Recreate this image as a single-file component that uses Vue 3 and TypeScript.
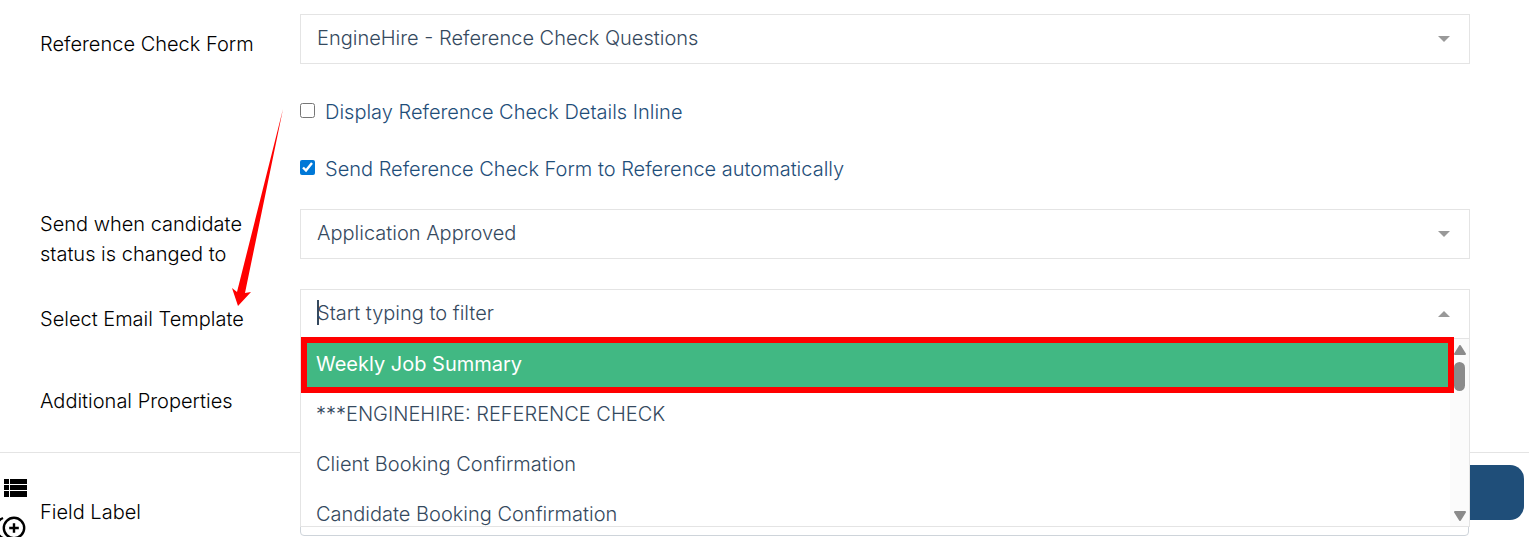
<script setup lang="ts">
import { ref } from 'vue'

const form = ref('EngineHire - Reference Check Questions')
const status = ref('Application Approved')
const inlineDetails = ref(false)
const autoSend = ref(true)
const filter = ref('')
const fieldLabel = ref('')
const highlighted = ref(0)
const templates: string[] = [
  'Weekly Job Summary',
  '***ENGINEHIRE: REFERENCE CHECK',
  'Client Booking Confirmation',
  'Candidate Booking Confirmation',
]
</script>

<template>
  <main class="page">
    <section class="group">
      <div class="row">
        <label class="label" for="form">Reference Check Form</label>
        <div class="control">
          <select id="form" v-model="form" class="box">
            <option>EngineHire - Reference Check Questions</option>
          </select>
          <svg class="arrow" viewBox="0 0 12 6" aria-hidden="true"><path d="M0 0H12L6 6Z" /></svg>
        </div>
      </div>

      <div class="checks">
        <label class="check">
          <input v-model="inlineDetails" type="checkbox" />
          <span>Display Reference Check Details Inline</span>
        </label>
        <label class="check">
          <input v-model="autoSend" type="checkbox" />
          <span>Send Reference Check Form to Reference automatically</span>
        </label>
      </div>

      <div class="row">
        <label class="label" for="status">Send when candidate status is changed to</label>
        <div class="control">
          <select id="status" v-model="status" class="box">
            <option>Application Approved</option>
          </select>
          <svg class="arrow" viewBox="0 0 12 6" aria-hidden="true"><path d="M0 0H12L6 6Z" /></svg>
        </div>
      </div>

      <div class="row">
        <label class="label" for="template">Select Email Template</label>
        <div class="control">
          <input id="template" v-model="filter" class="box" type="text" placeholder="Start typing to filter" autocomplete="off" />
          <span class="caret"></span>
          <svg class="arrow" viewBox="0 0 12 6" aria-hidden="true"><path d="M0 6H12L6 0Z" /></svg>
          <div class="menu">
            <ul class="options" role="listbox" aria-label="Email templates">
              <li
                v-for="(item, i) in templates"
                :key="item"
                role="option"
                :aria-selected="i === highlighted"
                class="option"
                :class="{ active: i === highlighted }"
                @mouseenter="highlighted = i"
              >{{ item }}</li>
            </ul>
            <div class="scrollbar" aria-hidden="true">
              <svg viewBox="0 0 12 10"><path d="M6 1L11 9H1Z" /></svg>
              <span class="thumb"></span>
              <svg class="down" viewBox="0 0 12 10"><path d="M1 1H11L6 9Z" /></svg>
            </div>
          </div>
          <div class="outline"></div>
        </div>
      </div>

      <div class="row extra">
        <span class="label">Additional Properties</span>
      </div>

      <svg class="pointer" viewBox="0 0 52 198" aria-hidden="true">
        <path d="M51 0L13 184L19 183L6 197L0 179L5 183Z" />
      </svg>
    </section>

    <section class="field">
      <div class="tools">
        <svg class="tool" viewBox="0 0 24 18" aria-hidden="true">
          <path d="M0 0H5V5H0ZM6 0H23V5H6ZM0 6H5V11H0ZM6 6H23V11H6ZM0 12H5V18H0ZM6 12H23V18H6Z" />
        </svg>
        <svg class="tool plus" viewBox="0 0 32 24" aria-hidden="true">
          <circle cx="20" cy="12" r="10.2" />
          <path d="M20 7.2V16.8M15.2 12H24.8M9 2A11 11 0 0 0 9 22" />
        </svg>
      </div>
      <label class="label" for="field">Field Label</label>
      <input id="field" v-model="fieldLabel" class="text" type="text" />
      <button class="save" type="button" aria-label="Save"></button>
    </section>
  </main>
</template>

<style>
html {
  overflow: hidden;
  background: #fff;
}
</style>

<style scoped>
.page {
  font-family: Inter, "Open Sans", sans-serif;
  font-size: 20px;
  font-weight: 300;
  line-height: 30px;
  color: #000;
}
.page * {
  box-sizing: border-box;
}
.group {
  position: relative;
  margin-right: 3px;
  padding: 14px 59px 21px 40px;
  border-bottom: 1px solid #e4e4e4;
}
.row {
  display: grid;
  grid-template-columns: 260px 1fr;
  min-height: 60px;
  margin-bottom: 20px;
}
.label {
  align-self: center;
}
.row .label {
  max-width: 250px;
}
.control {
  position: relative;
  height: 50px;
}
.box {
  display: block;
  width: 100%;
  height: 50px;
  margin: 0;
  padding: 0 48px 2px 16px;
  border: 1px solid #e4e4e4;
  border-radius: 0;
  outline: none;
  appearance: none;
  background: #fff;
  color: #35495e;
  font: inherit;
}
.box::placeholder {
  color: #35495e;
  opacity: 1;
}
.arrow {
  position: absolute;
  top: 22px;
  right: 20px;
  width: 12px;
  height: 6px;
  fill: #999;
  pointer-events: none;
}
.checks {
  margin: -11px 0 12px 260px;
}
.check {
  display: flex;
  align-items: center;
  gap: 10px;
  height: 57px;
  color: #1f4e79;
}
.check input {
  width: 15px;
  height: 15px;
  margin: 0 0 2px;
  accent-color: #0078d7;
}
.caret {
  position: absolute;
  top: 11px;
  left: 17px;
  width: 2px;
  height: 25px;
  background: #35495e;
}
.menu {
  position: absolute;
  z-index: 2;
  top: 49px;
  left: 0;
  display: flex;
  width: 100%;
  height: 189px;
  border: 1px solid #e4e4e4;
  background: #fff;
}
.options {
  flex: 1;
  margin: 0;
  padding: 0;
  overflow: hidden;
  list-style: none;
}
.option {
  height: 50px;
  padding: 10px 15px;
  color: #35495e;
  white-space: nowrap;
}
.option.active {
  background: #41b883;
  color: #fff;
  font-weight: 400;
}
.scrollbar {
  display: flex;
  flex-direction: column;
  align-items: center;
  width: 19px;
  padding: 6px 0 5px;
  background: #fbfbfb;
}
.scrollbar svg {
  width: 12px;
  height: 10px;
  fill: #8b8b8b;
  stroke: #8b8b8b;
  stroke-width: 2;
  stroke-linejoin: round;
}
.scrollbar .down {
  margin-top: auto;
}
.thumb {
  width: 11px;
  height: 29px;
  margin-top: 7px;
  border-radius: 6px;
  background: #8b8b8b;
}
.outline {
  position: absolute;
  z-index: 3;
  top: 48px;
  left: 1px;
  right: 16px;
  height: 56px;
  border: 6px solid #f00;
  pointer-events: none;
}
.extra {
  margin: 22px 0 0;
}
.pointer {
  position: absolute;
  z-index: 4;
  top: 109px;
  left: 232px;
  width: 52px;
  height: 198px;
  fill: #f00;
  pointer-events: none;
}
.field {
  position: relative;
  display: grid;
  grid-template-columns: 40px 260px 1fr;
  padding: 26px 63px 0 0;
}
.tools {
  display: flex;
  flex-direction: column;
  gap: 19px;
}
.tool {
  width: 24px;
  height: 18px;
  margin-left: 4px;
}
.plus {
  width: 32px;
  height: 24px;
  margin-left: -6px;
  fill: none;
  stroke: #000;
  stroke-width: 2.4;
}
.field .label {
  align-self: start;
  padding-top: 18px;
}
.text {
  width: 100%;
  height: 50px;
  margin-top: 7px;
  padding: 0 16px;
  border: 1px solid #ced4da;
  border-radius: 4px;
  background: #fff;
  font: inherit;
}
.save {
  position: absolute;
  top: 12px;
  right: 8px;
  width: 160px;
  height: 55px;
  border: 0;
  border-radius: 14px;
  background: #1f4e79;
}
</style>
